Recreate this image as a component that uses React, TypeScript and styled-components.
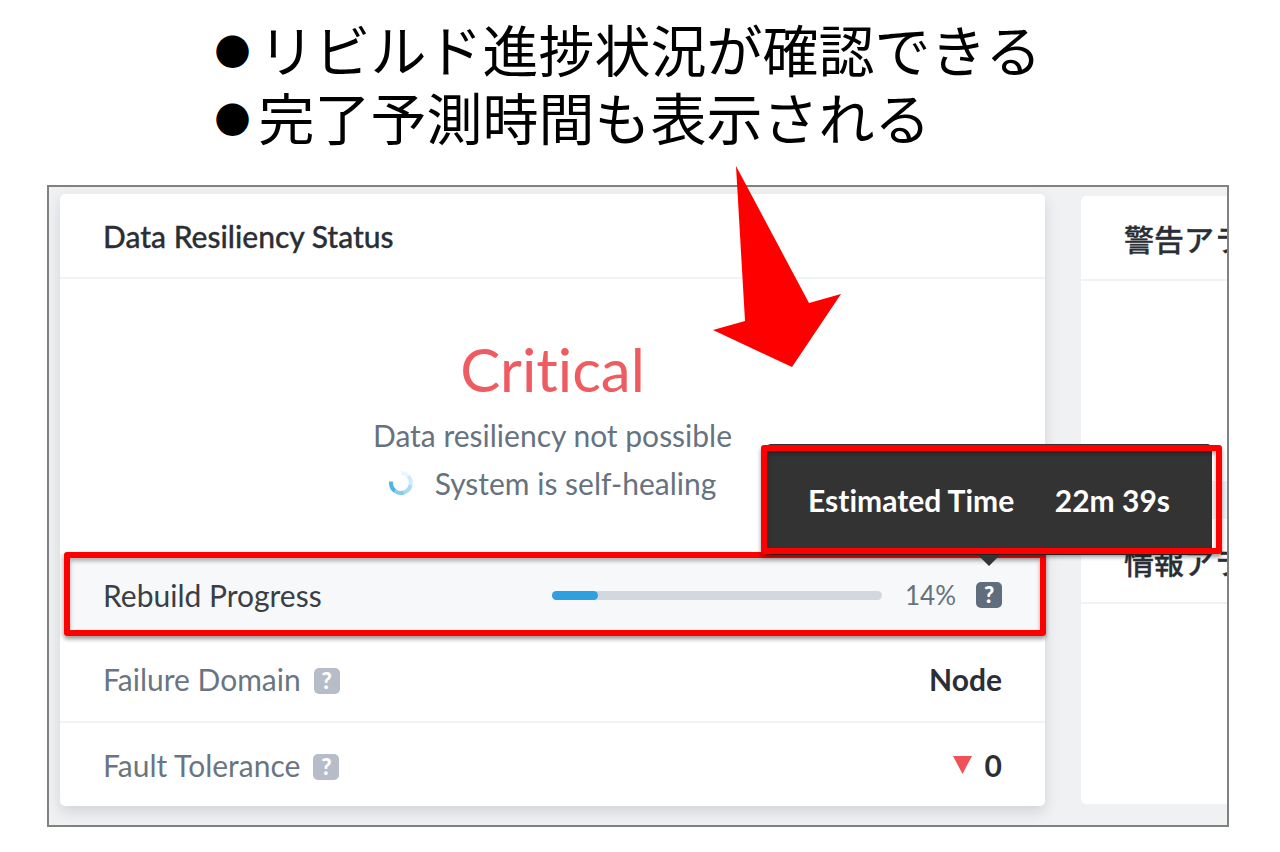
import React from "react";
import styled, { createGlobalStyle } from "styled-components";

const GlobalStyle = createGlobalStyle`
  *, *::before, *::after { box-sizing: border-box; }
  body {
    margin: 0;
    background: #fff;
    color: #2b2f35;
    font-family: Lato, "Noto Sans CJK JP", sans-serif;
    font-variant-ligatures: none;
  }
  h1, h2, p, ul, dl, dd, dt { margin: 0; padding: 0; font-weight: 400; }
`;

const Page = styled.main`
  padding: 14px 51px 24px 47px;
`;

const Notes = styled.ul`
  list-style: none;
  width: max-content;
  margin: 0 auto 35px;
  padding-right: 20px;
  color: #000;
  font-family: "Noto Sans CJK JP", sans-serif;
  font-size: 56px;
  line-height: 68px;
`;

const Note = styled.li`
  display: flex;
  align-items: center;
  height: 68px;
  white-space: nowrap;
`;

const Bullet = styled.span`
  width: 44px;
  padding-top: 4px;
  font-size: 36px;
  line-height: 68px;
`;

const Frame = styled.section`
  position: relative;
  border: 2px solid #808280;
`;

const Board = styled.div`
  display: flex;
  gap: 36px;
  padding: 7px 0 19px 11px;
  overflow: hidden;
  background: #f0f1f3;
`;

const Card = styled.article`
  flex: 1;
  min-width: 0;
  border-radius: 5px;
  background: #fff;
  box-shadow: 0 6px 14px rgba(50, 60, 70, 0.16);
`;

const CardHeader = styled.header`
  display: flex;
  align-items: center;
  height: 85px;
  padding: 0 43px;
  border-bottom: 2px solid #f1f2f4;
`;

const CardTitle = styled.h2`
  font-size: 30px;
  font-weight: 500;
  line-height: 36px;
  white-space: nowrap;
  -webkit-text-stroke: 0.3px currentColor;
`;

const Status = styled.div`
  display: flex;
  flex-direction: column;
  align-items: center;
  height: 275px;
  padding-top: 56px;
`;

const Level = styled.p`
  margin-bottom: 2px;
  color: #ee5b60;
  font-size: 60px;
  line-height: 68px;
`;

const Detail = styled.p`
  display: flex;
  align-items: center;
  gap: 22px;
  margin-top: 12px;
  color: #67727f;
  font-size: 30px;
  line-height: 36px;
`;

const Row = styled.div<{ $active?: boolean }>`
  position: relative;
  display: flex;
  align-items: center;
  justify-content: space-between;
  height: ${(p) => (p.$active ? 82 : 85)}px;
  padding: 0 43px;
  background: ${(p) => (p.$active ? "#f6f8fa" : "transparent")};
  & + & + & { border-top: 2px solid #f1f2f4; }
`;

const Label = styled.div<{ $dark?: boolean }>`
  display: flex;
  align-items: center;
  gap: 13px;
  color: ${(p) => (p.$dark ? "#3a3e45" : "#6b7582")};
  font-size: 30px;
  line-height: 36px;
`;

const Value = styled.div`
  display: flex;
  align-items: center;
  gap: 13px;
  font-size: 30px;
  font-weight: 700;
  line-height: 36px;
`;

const Meter = styled.div`
  display: flex;
  align-items: center;
  color: #67727f;
  font-size: 26px;
  line-height: 36px;
`;

const Track = styled.div`
  width: 330px;
  height: 9px;
  margin-right: 23px;
  border-radius: 5px;
  background: #d3d8e0;
`;

const Fill = styled.div`
  height: 9px;
  border-radius: 5px;
  background: #2e9fe0;
`;

const HelpWrap = styled.div`
  position: relative;
  margin-left: 20px;
`;

const HelpButton = styled.button<{ $dark?: boolean }>`
  display: block;
  width: 26px;
  height: 26px;
  padding: 0;
  border: 0;
  border-radius: 5px;
  background: ${(p) => (p.$dark ? "#5f6d7d" : "#b7bdc8")};
  color: #fff;
  font-family: Lato, sans-serif;
  font-size: 22px;
  font-weight: 900;
  line-height: 26px;
  text-align: center;
  ${Label} & { margin-top: 4px; }
`;

const RowOutline = styled.div`
  position: absolute;
  inset: -2px -1px 0 4px;
  border: 6px solid #f00;
  border-radius: 3px;
  box-shadow: 0 3px 4px rgba(0, 0, 0, 0.4), inset 0 3px 4px rgba(0, 0, 0, 0.3);
  pointer-events: none;
`;

const Tooltip = styled.div`
  position: absolute;
  z-index: 3;
  right: -210px;
  bottom: 53px;
  display: flex;
  align-items: center;
  justify-content: space-between;
  width: 446px;
  height: 111px;
  padding: 0 42px;
  border-radius: 5px;
  background: #333;
  color: #fff;
  font-size: 30px;
  font-weight: 700;
  line-height: 36px;
  white-space: nowrap;
  &::after {
    content: "";
    position: absolute;
    top: 100%;
    right: 212px;
    border: 11px solid transparent;
    border-top-color: #333;
    border-bottom: 0;
  }
`;

const TooltipOutline = styled.div`
  position: absolute;
  inset: 1px -10px 1px -5px;
  border: 6px solid #f00;
  border-radius: 3px;
  box-shadow: 0 3px 4px rgba(0, 0, 0, 0.4), inset 0 3px 4px rgba(0, 0, 0, 0.3);
  pointer-events: none;
`;

const Side = styled.aside`
  display: flex;
  flex: 0 0 146px;
  flex-direction: column;
  gap: 38px;
  min-width: 0;
  padding: 2px 0;
`;

const SideCard = styled.article`
  flex: 1;
  border-radius: 5px 0 0 5px;
  background: #fff;
  overflow: hidden;
`;

const SideTitle = styled(CardTitle)`
  font-family: "Noto Sans CJK JP", sans-serif;
`;

const Arrow = styled.svg`
  position: absolute;
  z-index: 4;
  top: -21px;
  right: 386px;
  width: 128px;
  height: 202px;
`;

function Spinner() {
  return (
    <svg width="24" height="24" viewBox="0 0 24 24" fill="none" strokeWidth="4" aria-hidden="true">
      <path d="M2.2 10.5A10 10 0 0 0 6 20" stroke="#55b4de" />
      <path d="M6 20A10 10 0 0 0 15 21.5" stroke="#86caee" />
      <path d="M15 21.5A10 10 0 0 0 21.5 14" stroke="#abdaf4" />
      <path d="M21.5 14A10 10 0 0 0 19 5" stroke="#cdeafa" />
      <path d="M19 5A10 10 0 0 0 12 2" stroke="#eaf6fd" />
    </svg>
  );
}

const PROGRESS = 14;

export default function App() {
  return (
    <>
      <GlobalStyle />
      <Page>
        <Notes>
          {["リビルド進捗状況が確認できる", "完了予測時間も表示される"].map((text) => (
            <Note key={text}>
              <Bullet>●</Bullet>
              {text}
            </Note>
          ))}
        </Notes>
        <Frame>
          <Board>
            <Card>
              <CardHeader>
                <CardTitle>Data Resiliency Status</CardTitle>
              </CardHeader>
              <Status>
                <Level>Critical</Level>
                <Detail>Data resiliency not possible</Detail>
                <Detail>
                  <Spinner />
                  System is self-healing
                </Detail>
              </Status>
              <Row $active>
                <Label $dark>Rebuild Progress</Label>
                <RowOutline />
                <Meter>
                  <Track role="progressbar" aria-label="Rebuild Progress" aria-valuenow={PROGRESS}>
                    <Fill style={{ width: `${PROGRESS}%` }} />
                  </Track>
                  {PROGRESS}%
                  <HelpWrap>
                    <HelpButton $dark type="button">?</HelpButton>
                    <Tooltip role="tooltip">
                      <span>Estimated Time</span>
                      <span>22m 39s</span>
                      <TooltipOutline />
                    </Tooltip>
                  </HelpWrap>
                </Meter>
              </Row>
              <Row>
                <Label>
                  Failure Domain
                  <HelpButton type="button">?</HelpButton>
                </Label>
                <Value>Node</Value>
              </Row>
              <Row>
                <Label>
                  Fault Tolerance
                  <HelpButton type="button">?</HelpButton>
                </Label>
                <Value>
                  <svg width="19" height="18" viewBox="0 0 19 18" aria-hidden="true">
                    <path d="M0 0H19L9.5 18Z" fill="#f0525a" />
                  </svg>
                  0
                </Value>
              </Row>
            </Card>
            <Side>
              <SideCard>
                <CardHeader>
                  <SideTitle>警告アラート</SideTitle>
                </CardHeader>
              </SideCard>
              <SideCard>
                <CardHeader>
                  <SideTitle>情報アラート</SideTitle>
                </CardHeader>
              </SideCard>
            </Side>
          </Board>
          <Arrow viewBox="0 0 128 202" aria-hidden="true">
            <path d="M23 0L96 137L128 128L79 201L0 164L32 155Z" fill="#f00" />
          </Arrow>
        </Frame>
      </Page>
    </>
  );
}
